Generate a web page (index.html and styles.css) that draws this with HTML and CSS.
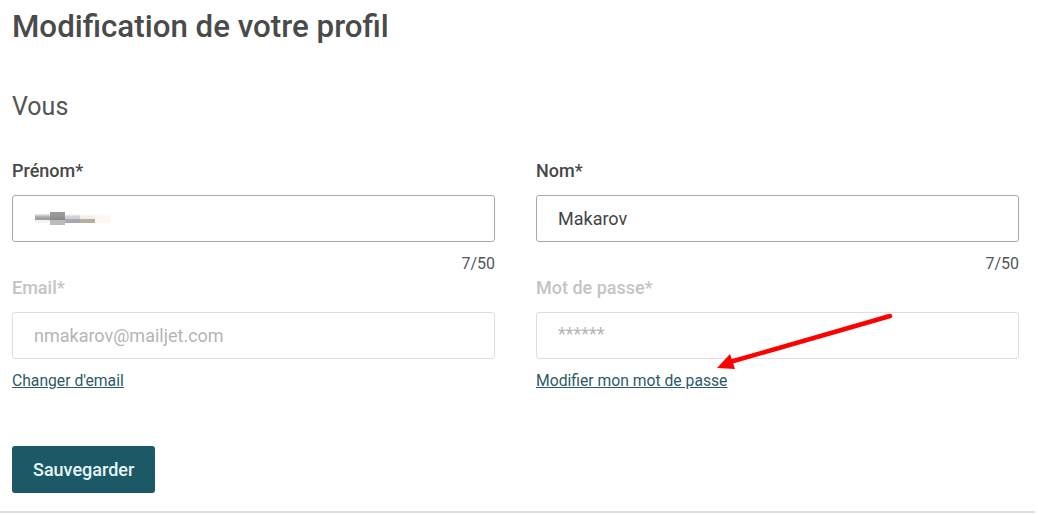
FILE: index.html
```html
<!DOCTYPE html>
<html lang="fr">
<head>
  <meta charset="UTF-8" />
  <meta name="viewport" content="width=device-width, initial-scale=1.0"/>
  <title>Modification de votre profil</title>
  <link rel="stylesheet" href="styles.css">
</head>
<body>

  <div class="page">
    <h1 class="title">Modification de votre profil</h1>
    <h2 class="section">Vous</h2>

    <form class="form">
      <div class="field">
        <label class="label">Prénom*</label>
        <div class="input">
          <div class="blur">
            <span class="px c1"></span><span class="px c2"></span><span class="px c3"></span><span class="px c4"></span><span class="px c5"></span>
          </div>
        </div>
        <div class="counter">7/50</div>
      </div>

      <div class="field">
        <label class="label">Nom*</label>
        <div class="input">Makarov</div>
        <div class="counter">7/50</div>
      </div>

      <div class="field disabled">
        <label class="label">Email*</label>
        <div class="input">nmakarov@mailjet.com</div>
        <a class="link" href="#">Changer d'email</a>
      </div>

      <div class="field disabled">
        <label class="label">Mot de passe*</label>
        <div class="input stars">******</div>
        <a class="link" href="#">Modifier mon mot de passe</a>
      </div>
    </form>

    <button class="save">Sauvegarder</button>
  </div>
  <div class="rule"></div>

  <svg class="arrow" width="200" height="80" viewBox="0 0 200 80">
    <line x1="190" y1="14" x2="30" y2="60" stroke="#f00" stroke-width="4.5" stroke-linecap="round"/>
    <polygon points="17,66 30,52 35,67" fill="#f00"/>
  </svg>

</body>
</html>
```

FILE: styles.css
```css
body {
  font-family: Roboto, "Liberation Sans", sans-serif;
  background: #fff;
  margin: 0;
  color: #444;
}

.page {
  padding: 0 19px 18px 12px;
}

.rule {
  height: 2px;
  background: #e0e0e0;
  margin-right: 3px;
}

.title {
  margin: 0;
  padding-top: 9px;
  font-size: 31.3px;
  font-weight: 500;
  line-height: 36px;
  color: #4a4a4a;
}

.section {
  margin: 47px 0 0;
  font-size: 25px;
  font-weight: 400;
  line-height: 30px;
  color: #555;
}

.form {
  display: grid;
  grid-template-columns: 1fr 1fr;
  column-gap: 41px;
  margin-top: 39px;
}

.field {
  display: flex;
  flex-direction: column;
}

.label {
  font-size: 18px;
  font-weight: 500;
  line-height: 20px;
  color: #484848;
  margin-bottom: 14px;
}

.input {
  box-sizing: border-box;
  height: 47px;
  border: 1px solid #a8a8a8;
  border-radius: 3px;
  padding: 0 21px;
  display: flex;
  align-items: center;
  font-size: 18px;
  color: #444;
}

.counter {
  text-align: right;
  font-size: 16px;
  line-height: 18px;
  margin-top: 13px;
  color: #555;
}

.disabled .label {
  color: #c4c4c4;
  margin-top: 5px;
}

.disabled .input {
  border-color: #dedede;
  color: #b5b5b5;
}

.stars {
  font-size: 18px;
  padding-bottom: 4px;
  color: #c0c0c0;
}

.link {
  font-size: 15.7px;
  line-height: 18px;
  margin-top: 13px;
  color: #2c5a66;
  text-decoration: underline;
  align-self: flex-start;
}

.blur {
  display: flex;
  align-items: center;
  margin-left: 1px;
}

.px {
  width: 15px;
  height: 9px;
  display: inline-block;
}

.px.c1 { background: linear-gradient(#eee 0, #aaa 33%, #9a9a9a 66%, #f4f4f4 66%); }
.px.c2 { background: linear-gradient(#999 0, #999 30%, #888 60%, #bbb 60%); height: 13px; }
.px.c3 { background: linear-gradient(#fff 0, #d0d0d0 30%, #d0d0d0 60%, #a6a6b4 60%); }
.px.c4 { background: linear-gradient(#fff 0, #eee 30%, #eee 60%, #b4b0a0 60%); }
.px.c5 { background: linear-gradient(#fff 0, #fbf6ee 30%, #fdf7ef 100%); }

.save {
  margin-top: 56px;
  height: 47px;
  padding: 0 21px;
  border: none;
  border-radius: 3px;
  background: #1b5967;
  color: #e8f4f8;
  font-family: Roboto, "Liberation Sans", sans-serif;
  font-size: 18px;
  font-weight: 500;
  cursor: pointer;
}

.arrow {
  position: absolute;
  left: 700px;
  top: 302px;
}
```
